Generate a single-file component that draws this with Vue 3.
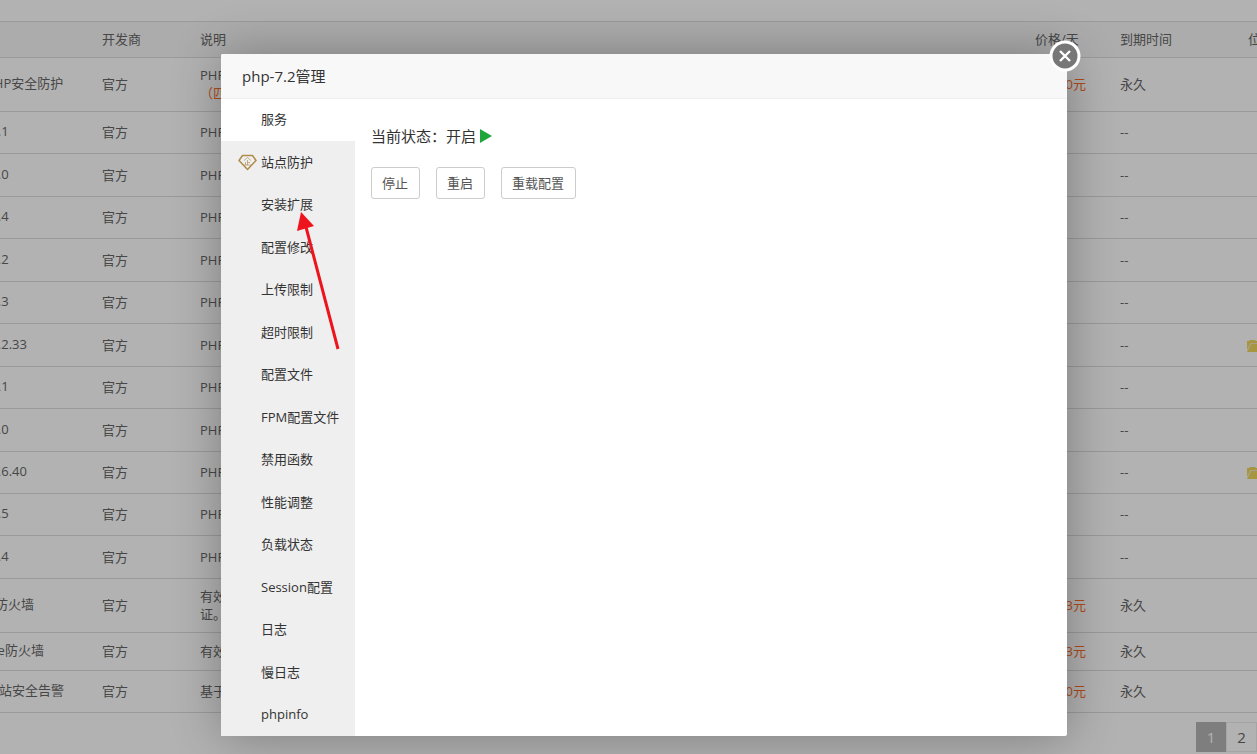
<script setup>
import { ref } from 'vue'

const rows = [
  { name: '堡塔PHP安全防护', desc: 'PHP', note: '（匹', price: '0元', expire: '永久', size: 'tall' },
  { name: 'PHP-8.1', desc: 'PHP', expire: '--', size: 'base' },
  { name: 'PHP-8.0', desc: 'PHP', expire: '--', size: 'plus' },
  { name: 'PHP-7.4', desc: 'PHP', expire: '--', size: 'base' },
  { name: 'PHP-7.2', desc: 'PHP', expire: '--', size: 'plus' },
  { name: 'PHP-7.3', desc: 'PHP', expire: '--', size: 'base' },
  { name: 'PHP-7.2.33', desc: 'PHP', expire: '--', size: 'plus', folder: true },
  { name: 'PHP-7.1', desc: 'PHP', expire: '--', size: 'base' },
  { name: 'PHP-7.0', desc: 'PHP', expire: '--', size: 'plus' },
  { name: 'PHP-5.6.40', desc: 'PHP', expire: '--', size: 'base', folder: true },
  { name: 'PHP-5.5', desc: 'PHP', expire: '--', size: 'base' },
  { name: 'PHP-5.4', desc: 'PHP', expire: '--', size: 'plus' },
  { name: 'Nginx防火墙', desc: '有效', more: '证。', price: '3元', expire: '永久', size: 'tall' },
  { name: 'Apache防火墙', desc: '有效', price: '3元', expire: '永久', size: 'short' },
  { name: '堡塔网站安全告警', desc: '基于', price: '0元', expire: '永久', size: 'base' },
]

const tabs = [
  '服务', '站点防护', '安装扩展', '配置修改', '上传限制', '超时限制', '配置文件', 'FPM配置文件',
  '禁用函数', '性能调整', '负载状态', 'Session配置', '日志', '慢日志', 'phpinfo',
]
const active = ref('服务')
</script>

<template>
  <div class="page">
    <main class="list">
      <table>
        <colgroup>
          <col class="c-name" /><col class="c-dev" /><col /><col class="c-price" /><col class="c-expire" /><col class="c-place" />
        </colgroup>
        <thead>
          <tr>
            <th></th><th>开发商</th><th>说明</th><th>价格/天</th><th>到期时间</th><th>位置</th>
          </tr>
        </thead>
        <tbody>
          <tr v-for="row in rows" :key="row.name" :class="row.size">
            <td class="name" :class="{ version: row.expire === '--' }">{{ row.name }}</td>
            <td>官方</td>
            <td>
              {{ row.desc }}
              <div v-if="row.note" class="orange">{{ row.note }}</div>
              <div v-if="row.more">{{ row.more }}</div>
            </td>
            <td class="price orange">{{ row.price }}</td>
            <td>{{ row.expire }}</td>
            <td class="place">
              <svg v-if="row.folder" width="18" height="14" viewBox="0 0 18 14">
                <path d="M0 11V2h2l1-1h5l1 1h6v2H4z" fill="#eed75f" />
                <path d="M0 13 4 5h14l-3 8z" fill="#eed75f" />
                <path d="M.5 11 3.500 4.500H16" fill="none" stroke="#f3e6c4" />
              </svg>
            </td>
          </tr>
        </tbody>
      </table>
      <nav class="pager">
        <span class="current">1</span>
        <a href="#">2</a>
      </nav>
    </main>

    <div class="mask">
      <section class="dialog" role="dialog" aria-labelledby="dialog-title">
        <h1 id="dialog-title">php-7.2管理</h1>
        <button class="close" aria-label="关闭">
          <svg width="32" height="32" viewBox="0 0 32 32">
            <circle cx="16" cy="16" r="14" fill="#777" stroke="#fff" stroke-width="3" />
            <path d="m11 11 10 10M21 11 11 21" stroke="#fff" stroke-width="2.400" />
          </svg>
        </button>
        <div class="body">
          <ul class="tabs">
            <li v-for="tab in tabs" :key="tab">
              <button :class="{ active: tab === active }" @click="active = tab">
                <svg v-if="tab === '站点防护'" class="gem" width="19" height="17" viewBox="0 0 19 17">
                  <path d="M4.500 1.500h10l3.500 5-8.500 9L1 6.500z" fill="none" stroke="#ad8c4c" stroke-width="1.500" stroke-linejoin="round" />
                  <path d="M6 6.500 9.500 3.500 13 6.500M9.500 6v5M9.500 8.500h2.500M7.500 8v3M6 11h7" fill="none" stroke="#b99c66" stroke-width=".8" />
                </svg>
                {{ tab }}
              </button>
            </li>
          </ul>
          <div class="content">
            <p class="status">
              当前状态：<span>开启</span>
              <svg width="12" height="14" viewBox="0 0 12 14"><path d="M0 0 12 7 0 14z" fill="#20a53a" /></svg>
            </p>
            <div class="actions">
              <button>停止</button>
              <button>重启</button>
              <button>重载配置</button>
            </div>
          </div>
        </div>
        <svg class="arrow" width="46" height="142" viewBox="0 0 46 142">
          <path d="M42 137 10 15" stroke="#ed141d" stroke-width="3" />
          <path d="M5 0 1 19 18 14z" fill="#ed141d" />
        </svg>
      </section>
    </div>
  </div>
</template>

<style>
body {
  margin: 0;
  background: #fff;
}
</style>

<style scoped>
.page {
  position: relative;
  box-sizing: border-box;
  min-height: 100vh;
  padding-top: 21px;
  overflow: hidden;
  color: #666;
  font: 13px/18px "Open Sans", "Noto Sans CJK SC", sans-serif;
}
button {
  font: inherit;
  cursor: pointer;
}
.list {
  width: calc(100% + 111px);
  margin-left: -50px;
}
table {
  width: 100%;
  table-layout: fixed;
  border-collapse: separate;
  border-spacing: 0;
  border-top: 1px solid #ddd;
}
.c-name { width: 142px; }
.c-dev { width: 98px; }
.c-price { width: 85px; }
.c-expire { width: 128px; }
.c-place { width: 80px; }
th,
td {
  box-sizing: border-box;
  padding: 0 10px 1px;
  border-bottom: 1px solid #ddd;
  text-align: left;
  font-weight: 400;
  white-space: nowrap;
}
th {
  height: 36px;
  background: #f6f6f6;
}
.short td { height: 38px; }
.base td { height: 42px; }
.plus td { height: 43px; }
.tall td { height: 54px; }
td.name {
  padding-bottom: 3px;
}
td.version {
  padding-left: 11px;
}
td.price {
  padding-right: 24px;
  text-align: right;
}
.orange {
  color: #fc6d26;
}
td.place {
  padding-left: 9px;
}
.place svg {
  display: block;
  margin-top: 2px;
}
.pager {
  display: flex;
  justify-content: flex-end;
  margin: 9px 61px 0 0;
  font-size: 15px;
  line-height: 28px;
  text-align: center;
}
.pager a,
.pager span {
  box-sizing: border-box;
  width: 31px;
  border: 1px solid #ececec;
  color: #666;
  text-decoration: none;
}
.pager .current {
  width: 30px;
  border-color: #b5b5b5;
  background: #b5b5b5;
  color: #fff;
}
.mask {
  position: absolute;
  inset: 0;
  display: flex;
  align-items: flex-start;
  justify-content: center;
  padding: 54px 0 0 31px;
  background: rgba(0, 0, 0, 0.3);
}
.dialog {
  position: relative;
  width: 846px;
  border-radius: 2px;
  background: #fff;
  box-shadow: 1px 1px 50px rgba(0, 0, 0, 0.3);
  color: #333;
}
h1 {
  margin: 0;
  padding: 0 21px;
  border-bottom: 1px solid #eee;
  border-radius: 2px 2px 0 0;
  background: #f8f8f8;
  font-size: 15px;
  font-weight: 400;
  line-height: 44px;
}
.close {
  position: absolute;
  top: -14px;
  right: -14px;
  padding: 0;
  border: 0;
  background: none;
}
.close svg {
  display: block;
}
.body {
  display: flex;
}
.tabs {
  width: 134px;
  margin: 0;
  padding: 0;
  background: #efefef;
  list-style: none;
}
.tabs button {
  position: relative;
  display: block;
  width: 100%;
  height: 42px;
  padding: 0 0 2px 40px;
  border: 0;
  background: none;
  color: #333;
  text-align: left;
  white-space: nowrap;
}
.tabs li:nth-child(even) button {
  height: 43px;
}
.tabs .active {
  background: #fff;
}
.gem {
  position: absolute;
  top: 13px;
  left: 17px;
}
.content {
  flex: 1;
  padding: 26px 16px;
}
.status {
  display: flex;
  align-items: center;
  margin: 0 0 20px;
  font-size: 15px;
  line-height: 22px;
}
.status svg {
  margin-left: 4px;
}
.actions {
  display: flex;
  gap: 16px;
}
.actions button {
  height: 32px;
  padding: 0 11px 0 10px;
  border: 1px solid #ccc;
  border-radius: 3px;
  background: #fff;
  color: #555;
}
.arrow {
  position: absolute;
  top: 158px;
  left: 75px;
  pointer-events: none;
}
</style>
